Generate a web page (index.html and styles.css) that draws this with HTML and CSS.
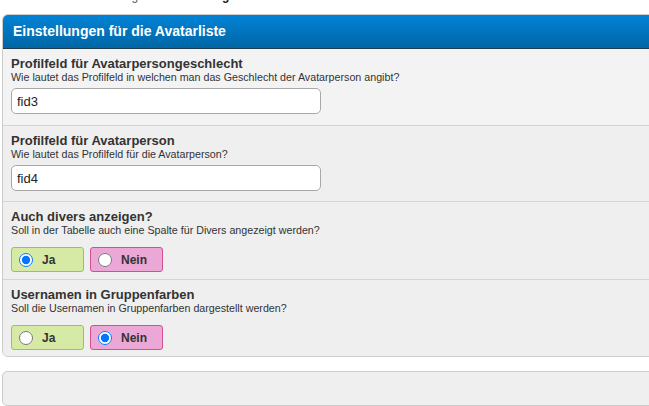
FILE: index.html
```html
<!DOCTYPE html>
<html lang="de">
<head>
<meta charset="utf-8">
<title>Einstellungen für die Avatarliste</title>
<link rel="stylesheet" href="styles.css">
</head>
<body>
<div class="page">
  <div class="crumbs">Home » Foreneinstellungen » <b>Einstellungen für die Avatarliste</b></div>
  <div class="box">
    <div class="head">Einstellungen für die Avatarliste</div>
    <div class="row alt">
      <div class="label">Profilfeld für Avatarpersongeschlecht</div>
      <div class="desc">Wie lautet das Profilfeld in welchen man das Geschlecht der Avatarperson angibt?</div>
      <input class="text" type="text" value="fid3">
    </div>
    <div class="row">
      <div class="label">Profilfeld für Avatarperson</div>
      <div class="desc">Wie lautet das Profilfeld für die Avatarperson?</div>
      <input class="text" type="text" value="fid4">
    </div>
    <div class="row tall">
      <div class="label">Auch divers anzeigen?</div>
      <div class="desc">Soll in der Tabelle auch eine Spalte für Divers angezeigt werden?</div>
      <div class="choices">
        <label class="choice yes"><input type="radio" name="divers" checked><span>Ja</span></label>
        <label class="choice no"><input type="radio" name="divers"><span>Nein</span></label>
      </div>
    </div>
    <div class="row last">
      <div class="label">Usernamen in Gruppenfarben</div>
      <div class="desc">Soll die Usernamen in Gruppenfarben dargestellt werden?</div>
      <div class="choices">
        <label class="choice yes"><input type="radio" name="farben"><span>Ja</span></label>
        <label class="choice no"><input type="radio" name="farben" checked><span>Nein</span></label>
      </div>
    </div>
  </div>
  <div class="footer"></div>
</div>
</body>
</html>
```

FILE: styles.css
```css
html, body {
  margin: 0;
  padding: 0;
  background: #fff;
  overflow: hidden;
}
body {
  font-family: "Liberation Sans", Arial, sans-serif;
  color: #333;
}
.page {
  width: 720px;
  padding: 0 0 0 2px;
  margin-top: -11px;
}
.crumbs {
  font-size: 12px;
  color: #555;
  height: 25px;
  line-height: 14px;
  padding-left: 2px;
}
.crumbs b { color: #222; }
.box {
  border: 1px solid #ccc;
  border-radius: 6px;
  overflow: hidden;
  background: #efefef;
}
.head {
  height: 33px;
  line-height: 33px;
  background: linear-gradient(#0283d7, #0066a5);
  border-bottom: 1px solid #1d3c4d;
  color: #fff;
  font-weight: bold;
  font-size: 14px;
  padding-left: 10px;
}
.row {
  box-sizing: border-box;
  height: 77px;
  padding: 8px 8px 0 8px;
  border-bottom: 1px solid #d4d4d4;
  background: #efefef;
}
.row.alt { background: #f3f3f3; }
.row.tall { height: 78px; }
.row.last { border-bottom: none; height: 76px; }
.row + .row { height: 76px; }
.row.tall { height: 78px; }
.row.last { height: 76px; }
.label {
  font-weight: bold;
  font-size: 13px;
  color: #333;
  line-height: 14px;
}
.desc {
  font-size: 10.7px;
  color: #333;
  line-height: 13px;
  margin-bottom: 4px;
}
.text {
  display: block;
  box-sizing: border-box;
  width: 310px;
  height: 26px;
  margin: 0;
  padding: 2px 5px;
  border: 1px solid #a8a8a8;
  border-radius: 5px;
  background: #fff;
  font-family: "Liberation Sans", Arial, sans-serif;
  font-size: 13px;
  color: #222;
}
.choices {
  display: flex;
  gap: 6px;
  padding-top: 6px;
}
.choice {
  box-sizing: border-box;
  width: 73px;
  height: 25px;
  display: flex;
  align-items: center;
  border-radius: 3px;
  font-weight: bold;
  font-size: 12px;
  color: #333;
}
.choice input {
  margin: 0 9px 0 7px;
  width: 14px;
  height: 14px;
}
.choice.yes {
  background: #d6eaa6;
  border: 1px solid #8ccc46;
}
.choice.no {
  background: #eba7d5;
  border: 1px solid #d1518f;
}
.footer {
  margin-top: 14px;
  height: 33px;
  background: #efefef;
  border: 1px solid #ccc;
  border-radius: 5px;
}
```
